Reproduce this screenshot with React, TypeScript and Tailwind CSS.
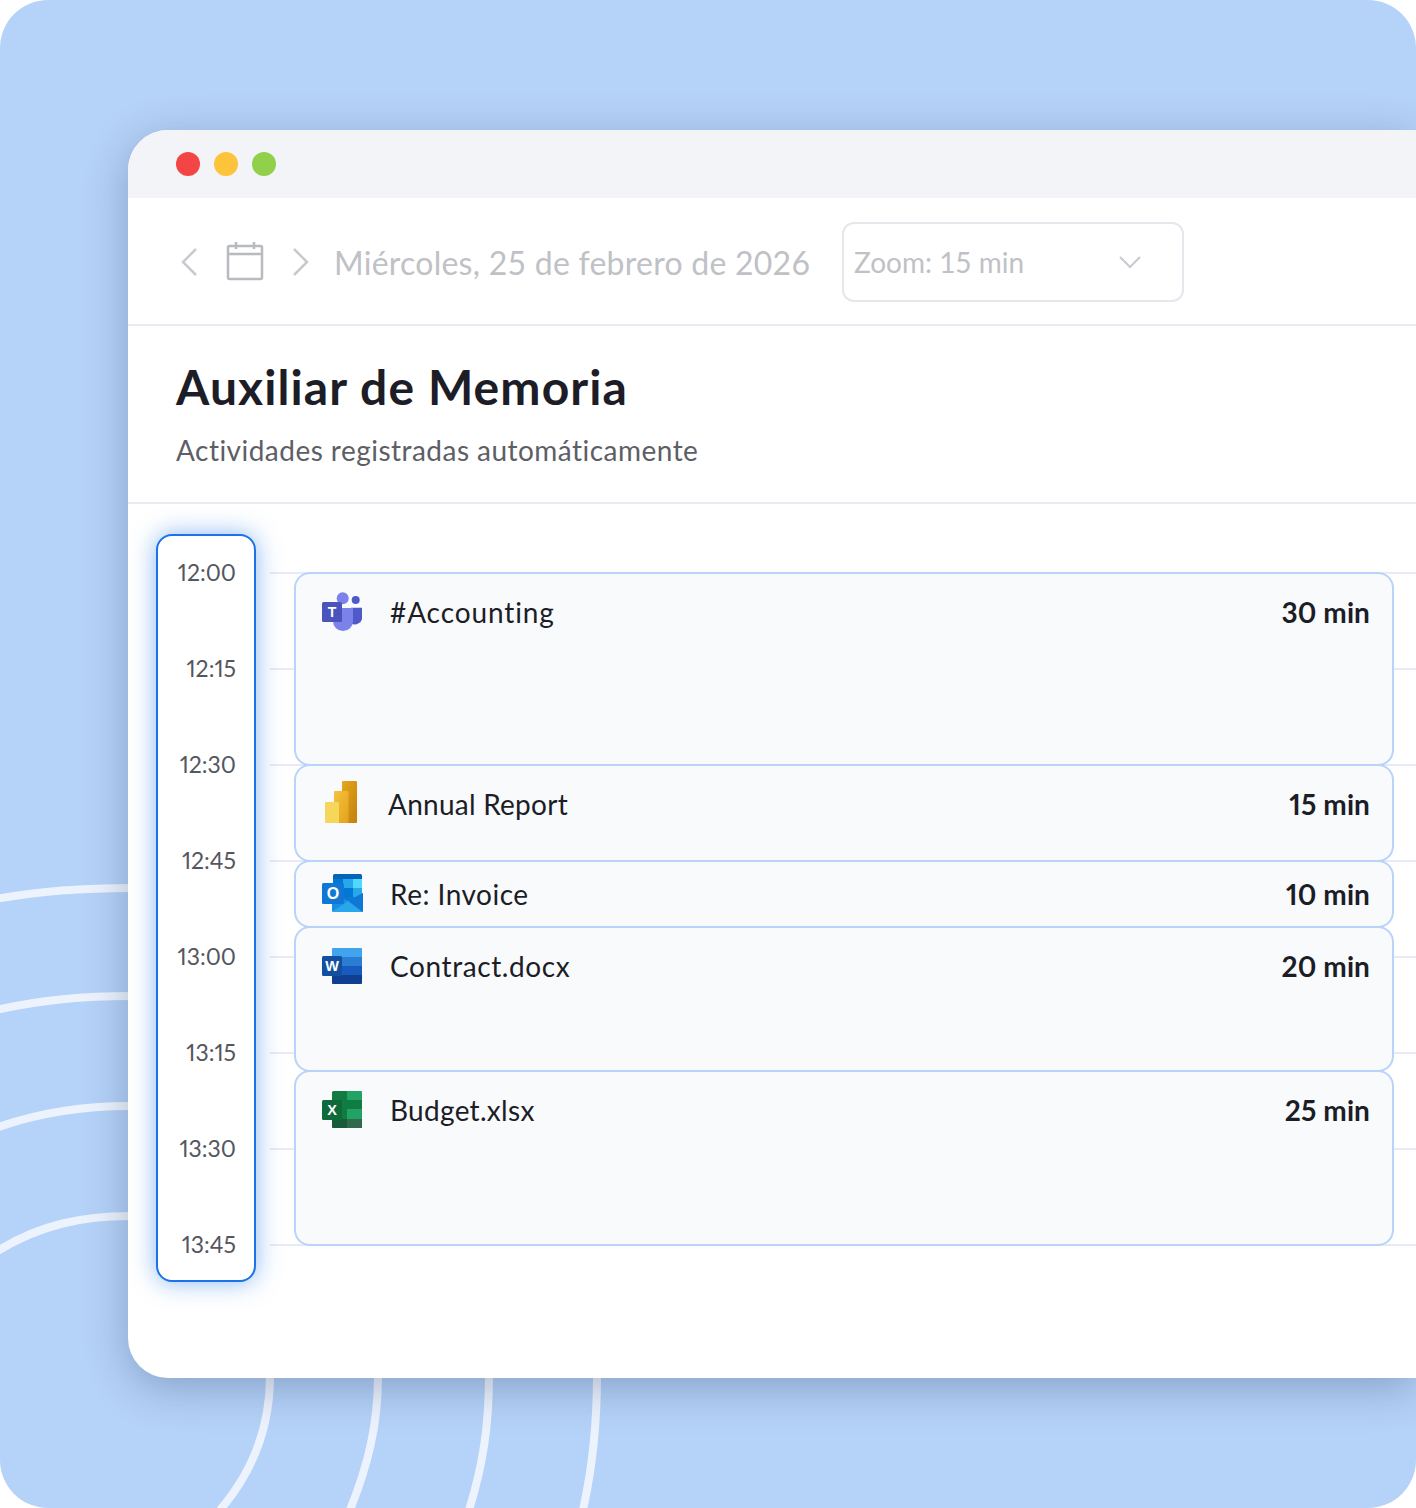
const times = ["12:00", "12:15", "12:30", "12:45", "13:00", "13:15", "13:30", "13:45"];

function TeamsIcon() {
    return (
        <svg width="40" height="40" viewBox="0 0 40 40">
            <circle cx="33.7" cy="8" r="4" fill="#5059c9" />
            <path d="M29 15.7h11.300v9a7.600 7.600 0 0 1-11.300 6.800z" fill="#5059c9" />
            <circle cx="20.7" cy="6.3" r="6" fill="#7b83eb" />
            <path d="M11 16h20v13.500a10 9.500 0 0 1-20 0z" fill="#7b83eb" />
            <rect x="0" y="10" width="20" height="20" rx="1.500" fill="#4b53bc" />
            <text x="10" y="25" textAnchor="middle" fontSize="14" fontWeight="700" fill="#fff" fontFamily="Liberation Sans, sans-serif">T</text>
        </svg>
    );
}

function PowerBiIcon() {
    return (
        <svg width="32" height="44" viewBox="0 0 32 44">
            <defs>
                <linearGradient id="pbi1" x1="0" y1="0" x2="1" y2="1">
                    <stop offset="0" stopColor="#e5a81c" />
                    <stop offset="1" stopColor="#c47f0e" />
                </linearGradient>
                <linearGradient id="pbi2" x1="0" y1="0" x2="1" y2="1">
                    <stop offset="0" stopColor="#f6c23c" />
                    <stop offset="1" stopColor="#e3a21d" />
                </linearGradient>
            </defs>
            <rect x="17" y="1" width="15" height="42" rx="1" fill="url(#pbi1)" />
            <rect x="9" y="11" width="14.500" height="32" rx="1" fill="url(#pbi2)" />
            <rect x="0" y="22" width="14" height="21" rx="1" fill="#f6d75c" />
        </svg>
    );
}

function OutlookIcon() {
    return (
        <svg width="42" height="40" viewBox="0 0 42 40">
            <rect x="11" y="1" width="29" height="30" rx="1.500" fill="#0364b8" />
            <rect x="11" y="6" width="10" height="9" fill="#0078d4" />
            <rect x="21" y="6" width="10" height="9" fill="#28a8ea" />
            <rect x="31" y="6" width="9" height="9" fill="#50d9ff" />
            <rect x="21" y="15" width="10" height="9" fill="#0078d4" />
            <rect x="31" y="15" width="9" height="9" fill="#28a8ea" />
            <rect x="11" y="24" width="29" height="7" fill="#0f78d4" />
            <path d="M10 20l16 8 15-8v17.500a1.500 1.500 0 0 1-1.500 1.500h-28a1.500 1.500 0 0 1-1.500-1.500z" fill="#1a8fe0" />
            <path d="M41 20v17.500a1.500 1.500 0 0 1-1 1.400L26 28z" fill="#0f78d4" />
            <path d="M10.500 38.500 26 28l14 10.800a1.500 1.500 0 0 1-.5.200h-28a1.500 1.500 0 0 1-1-.500z" fill="#28a8ea" />
            <rect x="0" y="10" width="22" height="21" rx="1.500" fill="#0f78d4" />
            <text x="11" y="26" textAnchor="middle" fontSize="16" fontWeight="700" fill="#fff" fontFamily="Liberation Sans, sans-serif">O</text>
        </svg>
    );
}

function WordIcon() {
    return (
        <svg width="40" height="40" viewBox="0 0 40 40">
            <rect x="10" y="2" width="30" height="36" rx="1.500" fill="#2b7cd3" />
            <path d="M11.500 2h27a1.500 1.500 0 0 1 1.500 1.500V11H10V3.500A1.500 1.500 0 0 1 11.500 2z" fill="#41a5ee" />
            <rect x="10" y="20" width="30" height="9" fill="#185abd" />
            <path d="M10 29h30v7.500a1.500 1.500 0 0 1-1.500 1.500h-27a1.500 1.500 0 0 1-1.500-1.500z" fill="#103f91" />
            <rect x="0" y="10" width="20" height="20" rx="1.500" fill="#12509f" />
            <text x="10" y="25" textAnchor="middle" fontSize="14.500" fontWeight="700" fill="#fff" fontFamily="Liberation Sans, sans-serif">W</text>
        </svg>
    );
}

function ExcelIcon() {
    return (
        <svg width="40" height="40" viewBox="0 0 40 40">
            <rect x="10" y="1" width="30" height="37" rx="1.500" fill="#107c41" />
            <path d="M25 1h13.500A1.500 1.500 0 0 1 40 2.500V10H25z" fill="#21a366" />
            <rect x="25" y="10" width="15" height="9" fill="#107c41" />
            <rect x="25" y="19" width="15" height="10" fill="#21a366" />
            <path d="M10 29h30v7.500a1.500 1.500 0 0 1-1.500 1.500h-27a1.500 1.500 0 0 1-1.500-1.500z" fill="#185c37" />
            <rect x="25" y="29" width="15" height="9" fill="#33694b" />
            <rect x="0" y="10" width="20" height="20" rx="1.500" fill="#0e6a3a" />
            <text x="10" y="25" textAnchor="middle" fontSize="14.500" fontWeight="700" fill="#fff" fontFamily="Liberation Sans, sans-serif">X</text>
        </svg>
    );
}

export default function App() {
    return (
        <div className="relative h-[1508px] w-[1416px] overflow-hidden rounded-[48px] bg-[#b5d2f8] pl-[128px] pt-[130px] font-['Lato',sans-serif] [font-variant-ligatures:none]">
            {/* background arcs */}
            <svg className="absolute left-0 top-0" width="1416" height="1508" fill="none" stroke="#edf3fd" strokeWidth="8">
                <path d="M-4 899C40 891 85 888 130 888" />
                <path d="M-4 1010C40 1000 85 996 130 996" />
                <path d="M-4 1128C40 1112 85 1106 130 1106" />
                <path d="M-4 1252C40 1224 85 1216 130 1216" />
                <path d="M270 1376C270 1430 250 1475 220 1510" />
                <path d="M378 1376C378 1425 368 1465 350 1510" />
                <path d="M489 1376C489 1425 483 1465 469 1510" />
                <path d="M597 1376C597 1425 593 1465 583 1510" />
            </svg>

            <div className="relative h-[1248px] w-[1288px] overflow-hidden rounded-l-[40px] bg-white shadow-[0_10px_44px_rgba(30,50,90,0.3)]">
                <div className="flex h-[68px] items-center gap-[14px] bg-[#f3f4f8] pl-[48px]">
                    <span className="h-6 w-6 rounded-full bg-[#f34545]" />
                    <span className="h-6 w-6 rounded-full bg-[#fdc33a]" />
                    <span className="h-6 w-6 rounded-full bg-[#92cf4b]" />
                </div>

                <div className="flex h-[128px] items-center border-b-2 border-[#e8ebf2] pl-[48px] pt-[2px]">
                    <svg className="ml-[4px]" width="18" height="30" viewBox="0 0 18 30" fill="none" stroke="#c9cacf" strokeWidth="2.500">
                        <path d="M16 2 3 15l13 13" />
                    </svg>
                    <svg className="-mt-[2px] ml-[28px]" width="38" height="40" viewBox="0 0 38 40" fill="none" stroke="#b9babf" strokeWidth="2.500">
                        <rect x="2" y="5" width="34" height="33" rx="1.500" />
                        <path d="M2 13h34M10 1v7M28 1v7" />
                    </svg>
                    <svg className="ml-[28px]" width="18" height="30" viewBox="0 0 18 30" fill="none" stroke="#c9cacf" strokeWidth="2.500">
                        <path d="M2 2l13 13L2 28" />
                    </svg>
                    <span className="ml-[24px] mt-[2px] w-[508px] whitespace-nowrap text-[32px] tracking-[0.25px] text-[#c0c1c6]">Miércoles, 25 de febrero de 2026</span>
                    <div className="flex h-[80px] w-[342px] items-center justify-between rounded-xl border-2 border-[#e6e6ec] pl-[10px] pr-[40px]">
                        <span className="text-[28px] text-[#c0c1c6]">Zoom: 15 min</span>
                        <svg width="24" height="14" viewBox="0 0 24 14" fill="none" stroke="#c9cacf" strokeWidth="2">
                            <path d="M2 2l10 10L22 2" />
                        </svg>
                    </div>
                </div>

                <div className="h-[178px] border-b-2 border-[#e8ebf2] pl-[48px] pt-[29px]">
                    <h1 className="text-[48px] font-bold leading-[64px] tracking-[1.1px] text-[#1c1d26]">Auxiliar de Memoria</h1>
                    <p className="mt-[11px] text-[28px] leading-[40px] tracking-[0.47px] text-[#5d5e66]">Actividades registradas automáticamente</p>
                </div>

                <div className="relative flex pl-[28px] pt-[30px]">
                    <div className="z-10 flex h-[748px] w-[100px] flex-col rounded-2xl border-2 border-[#1a73e8] bg-white pr-[18px] pt-[19px] shadow-[0_0_24px_rgba(26,115,232,0.5)]">
                        {times.map((t) => (
                            <div key={t} className="h-[96px] shrink-0 text-right text-[23px] leading-[34px] text-[#55565e] [font-variant-numeric:proportional-nums]">{t}</div>
                        ))}
                    </div>

                    {/* hour lines run behind the cards */}
                    <div className="absolute left-[142px] right-0 top-[68px]">
                        {times.map((t) => (
                            <div key={t} className="h-[96px] border-t-2 border-[#e8ebf7]" />
                        ))}
                    </div>

                    <div className="relative ml-[38px] mt-[38px] flex w-[1100px] flex-col">
                        <Card height={194} icon={<TeamsIcon />} title="#Accounting" duration="30 min" top="pt-[18px]" track="tracking-[0.9px]" />
                        <Card height={98} icon={<PowerBiIcon />} title="Annual Report" duration="15 min" top="pt-[14px]" iconBox="w-[66px] pl-[3px]" textTop="mt-[4px]" track="tracking-[0.25px]" />
                        <Card height={68} icon={<OutlookIcon />} title="Re: Invoice" duration="10 min" top="pt-[11px]" textTop="mt-[1px]" />
                        <Card height={146} icon={<WordIcon />} title="Contract.docx" duration="20 min" top="pt-[18px]" track="tracking-[0.6px]" />
                        <Card height={176} icon={<ExcelIcon />} title="Budget.xlsx" duration="25 min" top="pt-[18px]" track="tracking-[0.3px]" />
                    </div>
                </div>
            </div>
        </div>
    );
}

type TCardProps = {
    height: number;
    icon: React.ReactNode;
    title: string;
    duration: string;
    top: string;
    iconBox?: string;
    textTop?: string;
    track?: string;
}

function Card({ height, icon, title, duration, top, iconBox = "w-[68px]", textTop = "", track = "tracking-[0.5px]" }: TCardProps) {
    return (
        <div style={{ height }} className={`-mb-[2px] flex items-start rounded-2xl border-2 border-[#b9d3f9] bg-[#f8fafc] pl-[26px] pr-[22px] ${top}`}>
            <div className={`flex shrink-0 ${iconBox}`}>{icon}</div>
            <span className={`flex-1 text-[28px] leading-[40px] text-[#1c1d26] ${track} ${textTop}`}>{title}</span>
            <span className={`text-[28px] font-bold leading-[40px] tracking-[0.1px] text-[#1c1d26] [font-variant-numeric:proportional-nums] ${textTop}`}>{duration}</span>
        </div>
    );
}
